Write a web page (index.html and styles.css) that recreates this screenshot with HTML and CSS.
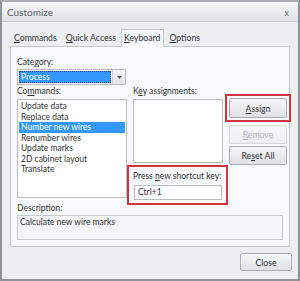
FILE: index.html
```
<!DOCTYPE html>
<html lang="en">
<head>
    <meta charset="UTF-8">
    <title>Customize</title>
    <link rel="stylesheet" href="styles.css">
</head>
<body>
    <div class="window">
        <!-- title bar -->
        <div class="titlebar">
            <span class="title">Customize</span>
            <span class="close-x">x</span>
        </div>

        <!-- tabs -->
        <div class="tabs">
            <span class="tab"><u>C</u>ommands</span>
            <span class="tab"><u>Q</u>uick Access</span>
            <span class="tab active"><u>K</u>eyboard</span>
            <span class="tab"><u>O</u>ptions</span>
        </div>

        <div class="panel">
            <div class="label">Cate<u>g</u>ory:</div>
            <div class="combo">
                <div class="combo-value"><span>Process</span></div>
                <div class="combo-btn">
                    <svg width="5" height="3" viewBox="0 0 5 3"><path d="M0 0h5L2.5 3z" fill="#555"/></svg>
                </div>
            </div>

            <div class="columns">
                <div class="col">
                    <div class="label">Co<u>m</u>mands:</div>
                    <ul class="listbox commands">
                        <li>Update data</li>
                        <li>Replace data</li>
                        <li class="selected">Number new wires</li>
                        <li>Renumber wires</li>
                        <li>Update marks</li>
                        <li>2D cabinet layout</li>
                        <li>Translate</li>
                    </ul>
                </div>

                <div class="col">
                    <div class="label">K<u>e</u>y assignments:</div>
                    <div class="listbox keys"></div>
                    <div class="shortcut">
                        <div class="label">Press <u>n</u>ew shortcut key:</div>
                        <div class="textbox">Ctrl+1</div>
                    </div>
                </div>

                <div class="col buttons">
                    <div class="highlight">
                        <button class="btn"><u>A</u>ssign</button>
                    </div>
                    <button class="btn" disabled><u>R</u>emove</button>
                    <button class="btn">Re<u>s</u>et All</button>
                </div>
            </div>

            <div class="label desc-label">Description:</div>
            <div class="description">Calculate new wire marks</div>
        </div>

        <div class="footer">
            <button class="btn close-btn">Close</button>
        </div>
    </div>
</body>
</html>
```
FILE: styles.css
```
/* ===== reset ===== */
* {
    margin: 0;
    padding: 0;
    box-sizing: border-box;
}

body {
    font-family: Lato, "Open Sans", sans-serif;
    font-size: 8.5px;
    color: #333;
    background: #fff;
}

u {
    text-decoration: underline;
    text-underline-offset: 1px;
}

/* ===== window frame ===== */
.window {
    width: 300px;
    height: 281px;
    border: 2px solid #8e9399;
    border-top-color: #a9adb2;
    background: #eceef0;
    display: flex;
    flex-direction: column;
}

.titlebar {
    height: 20px;
    display: flex;
    align-items: center;
    justify-content: space-between;
    padding: 1px 9px 0 5px;
    background: linear-gradient(#f6f7f8, #dfe2e5);
    border-bottom: 1px solid #c6cacf;
}

.title {
    font-size: 10px;
    color: #5a5f66;
}

.close-x {
    font-size: 9px;
    color: #666;
}

/* ===== tabs ===== */
.tabs {
    display: flex;
    align-items: flex-end;
    height: 23px;
    padding-left: 8px;
    margin-top: 1px;
}

.tab {
    padding: 0 4px 2px 4px;
    margin-right: 1px;
    color: #333;
    font-size: 8.7px;
    line-height: 13px;
    white-space: nowrap;
}

.tab.active {
    background: #f8f9fa;
    border: 1px solid #c4c8cd;
    border-bottom: none;
    padding: 1px 3px 3px 2px;
    margin: 0 1px 0 0;
    position: relative;
    top: 1px;
}

/* ===== panel ===== */
.panel {
    margin: 0 8px;
    height: 201px;
    background: #f8f9fa;
    border: 1px solid #c4c8cd;
    padding: 10px 5px 0 6px;
}

.label {
    line-height: 11px;
    height: 11px;
    white-space: nowrap;
}

.combo {
    display: flex;
    width: 109px;
    height: 16px;
    margin-top: 1px;
    border: 1px solid #b9bdc2;
    background: #fff;
}

.combo-value {
    flex: 1;
    padding: 1px;
}

.combo-value span {
    display: block;
    height: 100%;
    background: #3399ff;
    color: #fff;
    outline: 1px dotted #1a3b66;
    outline-offset: -1px;
    padding-left: 2px;
    line-height: 12px;
}

.combo-btn {
    width: 13px;
    border-left: 1px solid #d0d3d6;
    background: linear-gradient(#f6f6f6, #e4e6e8);
    display: flex;
    align-items: center;
    justify-content: center;
}

.columns {
    display: grid;
    grid-template-columns: 110px 90px 58px;
    column-gap: 6px;
    margin-top: 1px;
}

.listbox {
    list-style: none;
    background: #fff;
    border: 1px solid #b9bdc2;
    margin-top: 2px;
}

.commands {
    height: 99px;
    padding: 1px 1px 0 1px;
}

.commands li {
    line-height: 10.5px;
    padding-left: 2px;
    white-space: nowrap;
}

.commands li.selected {
    background: #3399ff;
    color: #fff;
}

.keys {
    height: 64px;
}

.shortcut {
    margin: 2px -5px -7px -6px;
    border: 2px solid #d2333e;
    padding: 2px 3px 4px 4px;
    height: 40px;
}

.shortcut .label {
    line-height: 14px;
    height: 14px;
}

.textbox {
    background: #fff;
    border: 1px solid #b9bdc2;
    height: 15px;
    margin: 2px 1px 0 1px;
    line-height: 13px;
    padding-left: 3px;
}

/* ===== buttons ===== */
.buttons {
    display: flex;
    flex-direction: column;
    padding-top: 8px;
}

.highlight {
    border: 2px solid #d2333e;
    padding: 2px;
    margin: 0 -4px;
}

.btn {
    font-family: inherit;
    font-size: 8.7px;
    color: #333;
    height: 19px;
    border: 1px solid #a8adb3;
    border-radius: 2px;
    background: linear-gradient(#f5f6f7, #dfe2e5);
}

.highlight .btn {
    display: block;
    width: 100%;
    height: 20px;
}

.btn:disabled {
    color: #b4b8bc;
    border-color: #d6d9dc;
    background: linear-gradient(#f6f7f8, #eceef0);
    margin-top: 3px;
}

.btn:disabled + .btn {
    margin-top: 2px;
}

.desc-label {
    margin-top: 4px;
    line-height: 12px;
    height: 12px;
}

.description {
    height: 25px;
    margin-top: 1px;
    margin-right: 1px;
    border: 1px solid #c7cbd0;
    background: #f3f5f7;
    padding: 0 2px;
    line-height: 12px;
}

/* ===== footer ===== */
.footer {
    display: flex;
    justify-content: flex-end;
    padding: 6px 6px 0 0;
}

.close-btn {
    width: 52px;
    height: 18px;
}
```
